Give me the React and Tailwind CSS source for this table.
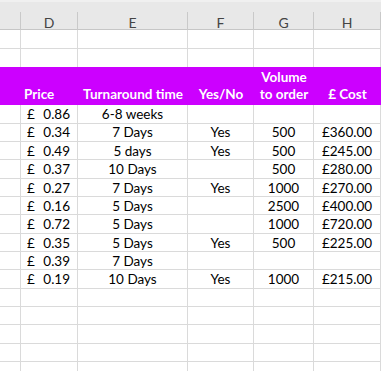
const cols = ['C', 'D', 'E', 'F', 'G', 'H']

const rows = [
  ['0.86', '6-8 weeks', '', '', ''],
  ['0.34', '7 Days', 'Yes', '500', '£360.00'],
  ['0.49', '5 days', 'Yes', '500', '£245.00'],
  ['0.37', '10 Days', '', '500', '£280.00'],
  ['0.27', '7 Days', 'Yes', '1000', '£270.00'],
  ['0.16', '5 Days', '', '2500', '£400.00'],
  ['0.72', '5 Days', '', '1000', '£720.00'],
  ['0.35', '5 Days', 'Yes', '500', '£225.00'],
  ['0.39', '7 Days', '', '', ''],
  ['0.19', '10 Days', 'Yes', '1000', '£215.00'],
]

const grid = 'grid grid-cols-[21px_57px_110px_66px_60px_67px]'
const cell = 'border-r border-b border-[#dadada] flex items-end pb-[0.5px] leading-[16px]'

function EmptyRow({ h = 'h-[18.35px]', line = true }) {
  return (
    <div className={`${grid} ${h}`}>
      {cols.map((c) => (
        <div key={c} className={`border-r border-[#dadada] ${line ? 'border-b' : ''}`} />
      ))}
    </div>
  )
}

export default function App() {
  return (
    <div className="w-[381px] h-[371px] overflow-hidden bg-white text-[13.5px] text-black" style={{ fontFamily: 'Lato, "Open Sans", sans-serif' }}>
      {/* column letters */}
      <div className={`${grid} h-[30px] bg-[#e8e8e8] border-t-2 border-[#f0f0f0] border-b border-b-[#c6c6c6]`}>
        {cols.map((c, i) => (
          <div key={c} className="flex flex-col">
            <div className="h-[10px]" />
            <div className="flex-1 border-r border-[#c9c9c9] flex items-center justify-center text-[14px] text-[#444]">
              {i > 0 ? c : ''}
            </div>
          </div>
        ))}
      </div>

      <EmptyRow h="h-[19.3px]" />
      <EmptyRow h="h-[17.5px]" line={false} />

      {/* title row */}
      <div className={`${grid} h-[38.5px] bg-[#cc00ff] text-white font-bold leading-[17px]`}>
        <div />
        <div className="flex items-end pl-[3px] pb-[2px]">Price</div>
        <div className="flex items-end justify-center pb-[2px] whitespace-nowrap">Turnaround time</div>
        <div className="flex items-end justify-center pb-[2px]">Yes/No</div>
        <div className="flex items-end justify-center pb-[2px] text-center">Volume<br />to order</div>
        <div className="flex items-end justify-center pb-[2px]">£ Cost</div>
      </div>

      {rows.map((r, i) => (
        <div key={i} className={`${grid} h-[18.35px]`}>
          <div className={cell} />
          <div className={`${cell} justify-between pl-[6px] pr-[7px]`}>
            <span>£</span>
            <span>{r[0]}</span>
          </div>
          <div className={`${cell} justify-center`}>{r[1]}</div>
          <div className={`${cell} justify-center`}>{r[2]}</div>
          <div className={`${cell} justify-center`}>{r[3]}</div>
          <div className={`${cell} justify-center`}>{r[4]}</div>
        </div>
      ))}

      <EmptyRow />
      <EmptyRow />
      <EmptyRow />
      <EmptyRow />
      <EmptyRow />
    </div>
  )
}
